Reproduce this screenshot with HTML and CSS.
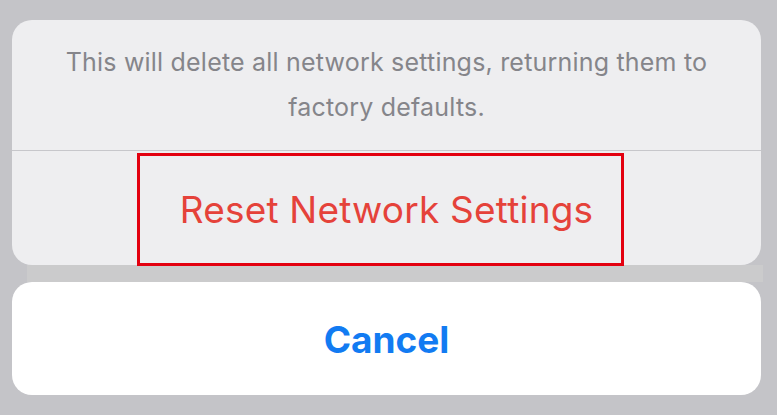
FILE: index.html
```html
<!DOCTYPE html>
<html lang="en">
<head>
<meta charset="utf-8">
<link rel="stylesheet" href="styles.css">
</head>
<body>
<div class="screen">
  <div class="sheet">
    <p class="message">This will delete all network settings, returning them to factory defaults.</p>
    <div class="action">
      <span class="destructive">Reset Network Settings</span>
      <div class="highlight"></div>
    </div>
  </div>
  <div class="gap"></div>
  <div class="cancel"><span>Cancel</span></div>
</div>
</body>
</html>
```
FILE: styles.css
```css
html, body {
  margin: 0;
  padding: 0;
  background: #c4c4c8;
  font-family: Inter, "Liberation Sans", sans-serif;
}
.screen {
  width: 777px;
  height: 415px;
  display: flex;
  flex-direction: column;
  padding-top: 20px;
  box-sizing: border-box;
}
.sheet {
  margin: 0 16px 0 12px;
  height: 245px;
  background: #eeeef0;
  border-radius: 20px;
  display: flex;
  flex-direction: column;
}
.message {
  margin: 0;
  padding: 20px 30px 0;
  height: 131px;
  box-sizing: border-box;
  border-bottom: 1px solid #c7c7cb;
  text-align: center;
  color: #85858a;
  font-size: 25px;
  line-height: 45px;
  letter-spacing: 0.2px;
}
.action {
  position: relative;
  flex: 1;
  display: flex;
  align-items: center;
  justify-content: center;
}
.destructive {
  color: #e5423a;
  font-size: 37px;
  letter-spacing: 0.2px;
  margin-top: 2px;
}
.highlight {
  position: absolute;
  left: 125px;
  top: 2px;
  width: 481px;
  height: 107px;
  border: 3px solid #e3000f;
}
.gap {
  margin: 0 14px 0 27px;
  height: 17px;
  background: #cbcbcc;
}
.cancel {
  margin: 0 16px 0 12px;
  height: 113px;
  background: #ffffff;
  border-radius: 20px;
  display: flex;
  align-items: center;
  justify-content: center;
}
.cancel span {
  color: #127bf2;
  font-size: 37px;
  font-weight: 700;
  margin-top: 2px;
}
```
